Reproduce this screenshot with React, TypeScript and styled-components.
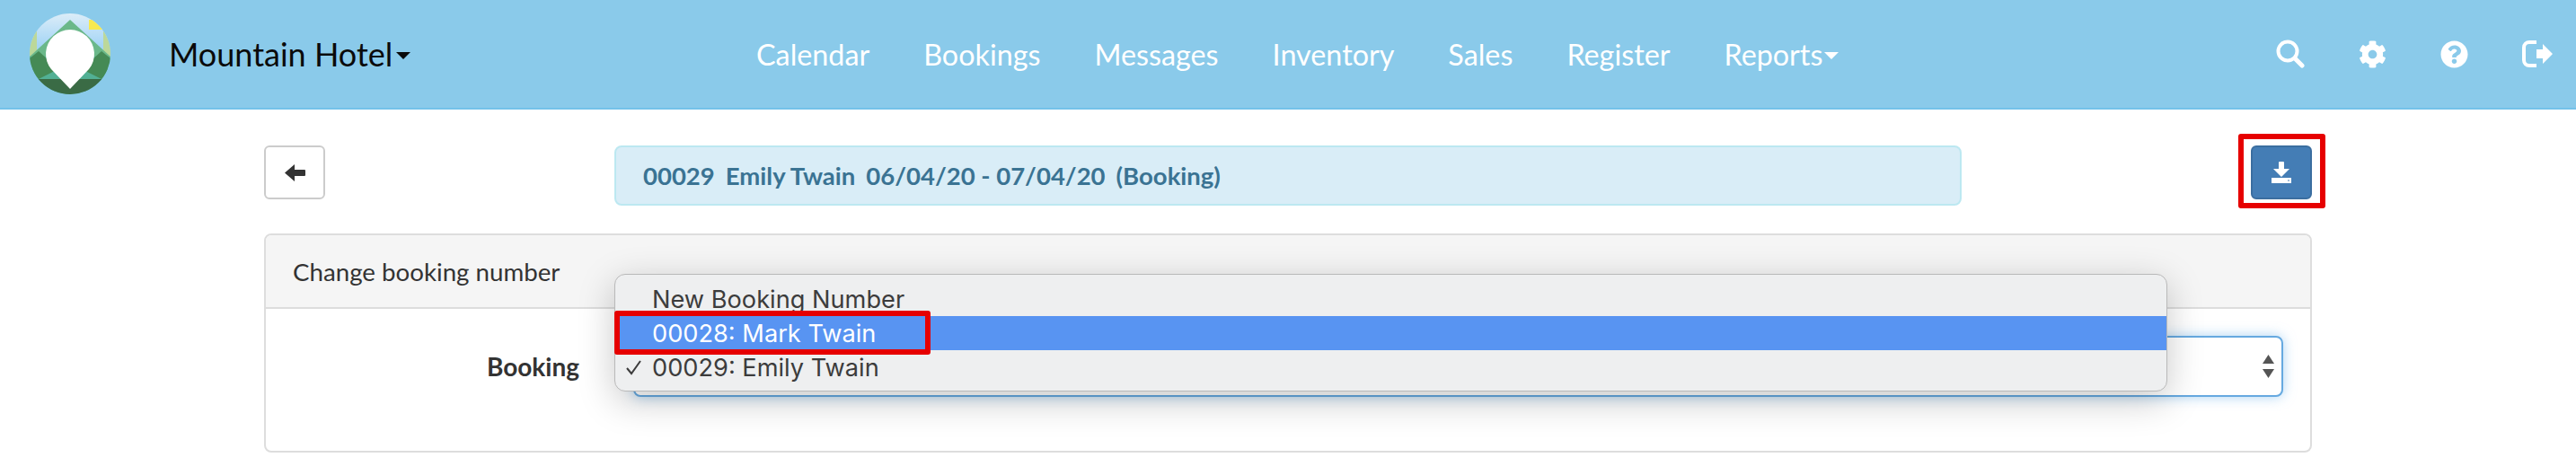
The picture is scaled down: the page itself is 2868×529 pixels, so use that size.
import React from "react";
import styled, { createGlobalStyle } from "styled-components";
import { FaCog, FaQuestionCircle } from "react-icons/fa";

const Global = createGlobalStyle`
  html, body { margin: 0; padding: 0; background: #fff; }
  body { font-family: Lato, "Liberation Sans", sans-serif; }
`;

const Page = styled.div`
  position: relative;
  width: 2868px;
  height: 529px;
  overflow: hidden;
  background: #fff;
`;

const Navbar = styled.header`
  display: flex;
  align-items: center;
  box-sizing: border-box;
  height: 122px;
  padding-left: 33px;
  background: #8acaea;
  border-bottom: 2px solid #74c2e9;
`;

const Logo = styled.svg`
  flex: none;
  width: 90px;
  height: 90px;
`;

const Brand = styled.div`
  display: flex;
  align-items: center;
  gap: 4px;
  width: 654px;
  margin-left: 65px;
  font-size: 36px;
  color: #0a0a0a;
`;

const Caret = styled.span<{ $color: string }>`
  display: inline-block;
  width: 0;
  height: 0;
  margin-top: 3px;
  border-left: 8px solid transparent;
  border-right: 8px solid transparent;
  border-top: 8px solid ${(p) => p.$color};
`;

const NavLinks = styled.nav`
  display: flex;
  gap: 60px;
`;

const NavLink = styled.a`
  display: flex;
  align-items: center;
  gap: 2px;
  font-size: 32.3px;
  color: #fff;
`;

const NavIcons = styled.div`
  display: flex;
  align-items: center;
  gap: 60px;
  margin-left: auto;
  margin-right: 26px;
  color: #fff;
  font-size: 32px;
`;

const Content = styled.main`
  position: relative;
  padding: 40px 294px 0;
`;

const TopRow = styled.div`
  display: flex;
  align-items: flex-start;
`;

const BackButton = styled.button`
  display: flex;
  align-items: center;
  justify-content: center;
  box-sizing: border-box;
  width: 68px;
  height: 60px;
  padding: 0;
  background: #fff;
  border: 2px solid #ccc;
  border-radius: 6px;
`;

const Alert = styled.div`
  display: flex;
  align-items: center;
  gap: 12px;
  box-sizing: border-box;
  width: 1500px;
  height: 67px;
  margin-left: 322px;
  padding-left: 30px;
  background: #d9edf7;
  border: 2px solid #bce8f1;
  border-radius: 8px;
  color: #3a7393;
  font-size: 27.5px;
  font-weight: 700;
`;

const DownloadButton = styled.button`
  display: flex;
  align-items: center;
  justify-content: center;
  box-sizing: border-box;
  width: 68px;
  height: 60px;
  margin-left: auto;
  padding: 0;
  background: #447db5;
  border: 2px solid #3b6ea0;
  border-radius: 6px;
`;

const Panel = styled.section`
  box-sizing: border-box;
  height: 244px;
  margin-top: 31px;
  background: #fff;
  border: 2px solid #ddd;
  border-radius: 8px;
`;

const PanelHeader = styled.div`
  display: flex;
  align-items: center;
  box-sizing: border-box;
  height: 82px;
  padding-left: 30px;
  background: #f5f5f5;
  border-bottom: 2px solid #ddd;
  border-radius: 6px 6px 0 0;
  font-size: 27.7px;
  color: #333;
`;

const FormRow = styled.div`
  display: flex;
  align-items: center;
  padding-top: 30px;
`;

const FieldLabel = styled.label`
  width: 349px;
  text-align: right;
  font-size: 28px;
  font-weight: 700;
  color: #333;
`;

const SelectBox = styled.div`
  display: flex;
  align-items: center;
  justify-content: flex-end;
  box-sizing: border-box;
  width: 1837px;
  height: 68px;
  margin-left: 60px;
  padding-right: 8px;
  background: #fff;
  border: 2px solid #66a9e0;
  border-radius: 8px;
  box-shadow: 0 0 14px rgba(102, 175, 233, 0.55);
`;

const Menu = styled.ul`
  position: absolute;
  left: 684px;
  top: 183px;
  box-sizing: border-box;
  width: 1729px;
  height: 131px;
  margin: 0;
  padding: 8px 0;
  list-style: none;
  background: #eeeff0;
  border: 1px solid #b9b9b9;
  border-radius: 12px;
  box-shadow: 0 10px 40px rgba(0, 0, 0, 0.22);
  font-family: Inter, "Open Sans", sans-serif;
  font-size: 27.2px;
  color: #3c3c3c;
`;

const MenuItem = styled.li<{ $active?: boolean }>`
  position: relative;
  display: flex;
  align-items: center;
  height: 38px;
  padding-left: 41px;
  background: ${(p) => (p.$active ? "#5894f2" : "transparent")};
  color: ${(p) => (p.$active ? "#fff" : "inherit")};
`;

const Check = styled.svg`
  position: absolute;
  left: 12px;
  top: 11px;
  width: 17px;
  height: 17px;
`;

const Highlight = styled.div`
  position: absolute;
  box-sizing: border-box;
  border: 6px solid #e60000;
  border-radius: 3px;
  pointer-events: none;
`;

const RowHighlight = styled(Highlight)`
  left: 684px;
  top: 346px;
  width: 352px;
  height: 49px;
`;

const DownloadHighlight = styled(Highlight)`
  left: 2492px;
  top: 149px;
  width: 97px;
  height: 83px;
`;

export default function App() {
  return (
    <Page>
      <Global />
      <Navbar>
        <Logo viewBox="0 0 90 90">
          <defs>
            <clipPath id="disc"><circle cx="45" cy="45" r="45" /></clipPath>
            <linearGradient id="sky" x1="0" y1="0" x2="0" y2="1">
              <stop offset="0" stopColor="#dcedf8" />
              <stop offset="0.4" stopColor="#a4d5f6" />
            </linearGradient>
          </defs>
          <g clipPath="url(#disc)">
            <rect width="90" height="90" fill="url(#sky)" />
            <rect x="66" y="7" width="18" height="11" fill="#f7e94f" />
            <rect x="0" y="20" width="8" height="30" fill="#bcd89a" />
            <rect x="82" y="20" width="8" height="30" fill="#bcd89a" />
            <polygon points="45,7 90,48 45,90 0,48" fill="#6bb88a" />
            <polygon points="0,48 90,48 90,90 0,90" fill="#52b094" />
            <polygon points="0,50 10,42 32,62 8,74 0,74" fill="#458a55" />
            <polygon points="90,50 80,42 58,62 82,74 90,74" fill="#458a55" />
            <rect x="0" y="73" width="90" height="17" fill="#3a6b45" />
            <path d="M45 84 L24 62 A27 27 0 1 1 66 62 Z" fill="#fff" />
          </g>
        </Logo>
        <Brand>
          Mountain Hotel
          <Caret $color="#0a0a0a" />
        </Brand>
        <NavLinks>
          <NavLink>Calendar</NavLink>
          <NavLink>Bookings</NavLink>
          <NavLink>Messages</NavLink>
          <NavLink>Inventory</NavLink>
          <NavLink>Sales</NavLink>
          <NavLink>Register</NavLink>
          <NavLink>
            Reports
            <Caret $color="#fff" />
          </NavLink>
        </NavLinks>
        <NavIcons>
          <svg width="32" height="32" viewBox="0 0 32 32" fill="none" stroke="#fff">
            <circle cx="13" cy="13" r="10.5" strokeWidth="4" />
            <line x1="21" y1="21" x2="29" y2="29" strokeWidth="5" strokeLinecap="round" />
          </svg>
          <FaCog size={31} />
          <FaQuestionCircle size={31} />
          <svg width="34" height="30" viewBox="0 0 34 30">
            <path d="M14 2 H8 A6 6 0 0 0 2 8 V22 A6 6 0 0 0 8 28 H14" fill="none" stroke="#fff" strokeWidth="4" strokeLinecap="square" />
            <path d="M16 10 H23 V4 L34 15 L23 26 V20 H16 Z" fill="#fff" />
          </svg>
        </NavIcons>
      </Navbar>
      <Content>
        <TopRow>
          <BackButton aria-label="Back">
            <svg width="23" height="19" viewBox="0 0 23 19">
              <path d="M0 9.5 L11 0 V6 H22 A1 1 0 0 1 23 7 V12 A1 1 0 0 1 22 13 H11 V19 Z" fill="#333" />
            </svg>
          </BackButton>
          <Alert>
            <span>00029</span>
            <span>Emily Twain</span>
            <span>06/04/20 - 07/04/20</span>
            <span>(Booking)</span>
          </Alert>
          <DownloadButton aria-label="Download">
            <svg width="22" height="24" viewBox="0 0 22 24">
              <path d="M8 1 A1 1 0 0 1 9 0 H13 A1 1 0 0 1 14 1 V8 H20 L11 17 L2 8 H8 Z" fill="#fff" />
              <path d="M0 18 H22 V24 H0 Z M18 20.5 V21.5 H20 V20.5 Z" fill="#fff" fillRule="evenodd" />
            </svg>
          </DownloadButton>
        </TopRow>
        <Panel>
          <PanelHeader>Change booking number</PanelHeader>
          <FormRow>
            <FieldLabel>Booking</FieldLabel>
            <SelectBox>
              <svg width="13" height="26" viewBox="0 0 13 26">
                <polygon points="6.5,0 13,10 0,10" fill="#555" />
                <polygon points="0,16 13,16 6.5,26" fill="#555" />
              </svg>
            </SelectBox>
          </FormRow>
        </Panel>
        <Menu>
          <MenuItem>New Booking Number</MenuItem>
          <MenuItem $active>00028: Mark Twain</MenuItem>
          <MenuItem>
            <Check viewBox="0 0 17 17" fill="none" stroke="#3c3c3c" strokeWidth="2">
              <polyline points="1,9 6,15 16,1" />
            </Check>
            00029: Emily Twain
          </MenuItem>
        </Menu>
      </Content>
      <RowHighlight />
      <DownloadHighlight />
    </Page>
  );
}
